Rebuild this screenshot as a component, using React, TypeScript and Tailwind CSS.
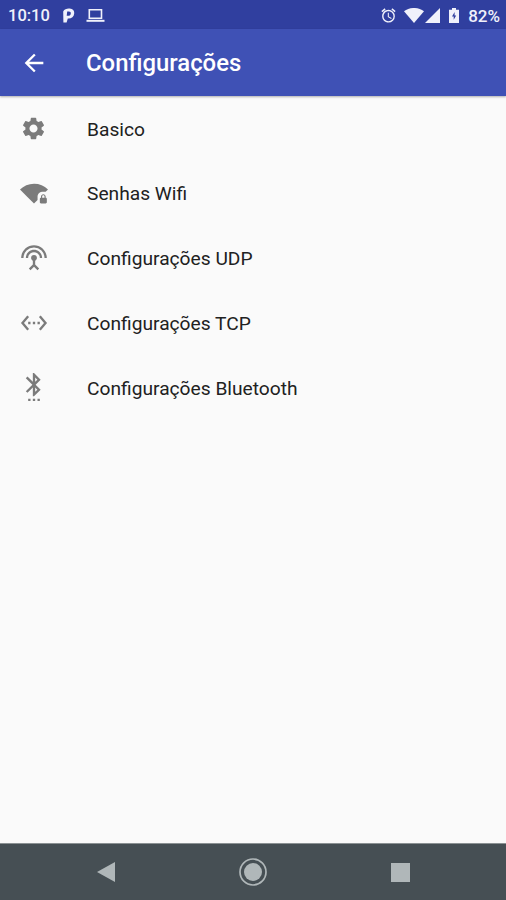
import type { ReactNode } from "react";
import {
	MdAlarm,
	MdArrowBack,
	MdSettings,
	MdSettingsBluetooth,
	MdSettingsEthernet,
	MdSettingsInputAntenna,
	MdSignalWifi4BarLock,
} from "react-icons/md";

interface SettingsItem {
	label: string;
	icon: ReactNode;
}

const items: SettingsItem[] = [
	{ label: "Basico", icon: <MdSettings size={27} /> },
	{ label: "Senhas Wifi", icon: <MdSignalWifi4BarLock size={28} /> },
	{ label: "Configurações UDP", icon: <MdSettingsInputAntenna size={28} /> },
	{ label: "Configurações TCP", icon: <MdSettingsEthernet size={28} /> },
	{ label: "Configurações Bluetooth", icon: <MdSettingsBluetooth size={28} className="mb-0.5" /> },
];

function StatusBar() {
	return (
		<div className="h-[29px] shrink-0 flex items-center justify-between pl-2 pr-[6px] pt-[2px] bg-[#303f9f] text-[#f0f1fb] text-[17px] leading-none font-medium">
			<div className="flex items-center">
				<span className="w-[54px] pt-0.5 text-[16.5px]">10:10</span>
				<svg width="13" height="15" viewBox="0 0 13 15" aria-hidden="true">
					<path
						fillRule="evenodd"
						fill="currentColor"
						d="M1.2 3.4C2.4 1 5 .3 7.6.5c3.2.2 4.9 2.3 4.6 5-.3 3.2-2.6 5-5.6 5h-.8L4.6 14.6H1.4zM5.2 3.6l-.5 4.1h1.5C7.7 7.7 8.7 6.9 8.8 5.4 8.9 4.2 8.2 3.5 6.9 3.5z"
					/>
				</svg>
				<svg className="ml-[11px]" width="19" height="15" viewBox="0 0 19 15" fill="none" aria-hidden="true">
					<path d="M3.3 1.8h12.2v8.4H3.3z" stroke="currentColor" strokeWidth="1.6" />
					<path d="M.5 11.8h18v2H.5z" fill="currentColor" />
				</svg>
			</div>
			<div className="flex items-center">
				<MdAlarm size={17} />
				<svg className="ml-[7px]" width="20" height="15" viewBox="0 0 20 15" fill="currentColor" aria-hidden="true">
					<path d="M0 3.2C5.5-1.1 14.5-1.1 20 3.2L10 15z" />
				</svg>
				<svg className="ml-px" width="15" height="15" viewBox="0 0 15 15" fill="currentColor" aria-hidden="true">
					<path d="M15 0v15H0z" />
				</svg>
				<svg className="ml-[9px]" width="10" height="15" viewBox="0 0 10 15" aria-hidden="true">
					<path d="M3 0h4v1.7h3V15H0V1.7h3z" fill="currentColor" />
					<path d="M5.6 4 3 8.6h1.7v3.2l2.5-4.4H5.6z" fill="#303f9f" />
				</svg>
				<span className="ml-[9px] pt-px">82%</span>
			</div>
		</div>
	);
}

function AppBar() {
	return (
		<header className="h-[67px] shrink-0 flex items-center pl-5 bg-[#3f51b5] text-white shadow-[0_1px_2px_rgba(0,0,0,0.3)]">
			<button type="button" aria-label="Voltar" className="w-[66px]">
				<MdArrowBack size={28} />
			</button>
			<h1 className="pt-0.5 text-[23.9px] font-medium">Configurações</h1>
		</header>
	);
}

function NavigationBar() {
	return (
		<nav className="h-[57px] shrink-0 flex items-center justify-between pl-[97px] pr-[96px] border-t border-[#8b9193] bg-[#464f54] text-[#b0b7b9]">
			<svg width="18" height="20" viewBox="0 0 18 20" fill="currentColor" aria-hidden="true">
				<path d="M18 0v20L0 10z" />
			</svg>
			<svg width="28" height="28" viewBox="0 0 28 28" aria-hidden="true">
				<circle cx="14" cy="14" r="13" fill="none" stroke="currentColor" strokeWidth="1.7" />
				<circle cx="14" cy="14" r="9" fill="currentColor" />
			</svg>
			<div className="size-[19px] bg-current" />
		</nav>
	);
}

export default function App() {
	return (
		<div className="w-full h-screen flex flex-col overflow-hidden bg-[#fafafa] font-['Roboto',sans-serif]">
			<StatusBar />
			<AppBar />
			<ul className="flex-1">
				{items.map((item) => (
					<li key={item.label} className="h-[64.8px] flex items-center pl-5 text-[19.2px] text-[#212121]">
						<span className="w-[67px] text-[#7b7b7b]">{item.icon}</span>
						<span className="pt-[3px]">{item.label}</span>
					</li>
				))}
			</ul>
			<NavigationBar />
		</div>
	);
}
